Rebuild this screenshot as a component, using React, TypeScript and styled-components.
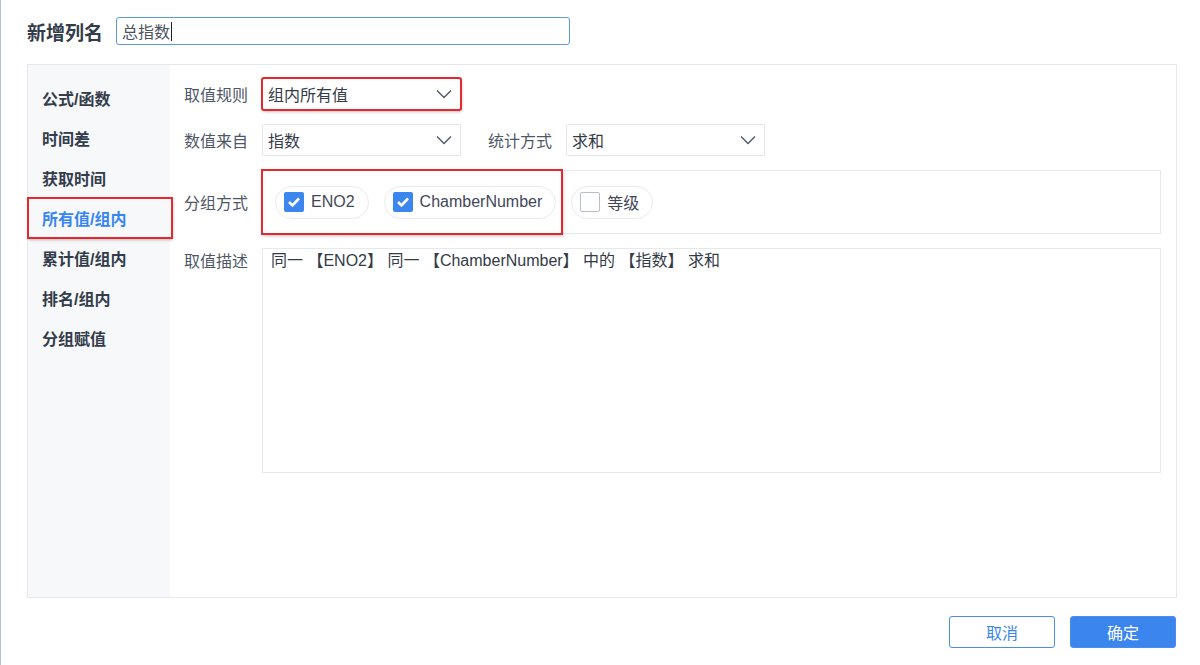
import React from 'react'
import styled, { createGlobalStyle, css } from 'styled-components'

const GlobalStyle = createGlobalStyle`
  html, body {
    margin: 0;
    padding: 0;
    background: #ffffff;
  }
  body {
    font-family: 'Liberation Sans', 'Noto Sans CJK SC', sans-serif;
    color: #333b48;
  }
`

const Page = styled.div`
  box-sizing: border-box;
  width: 1200px;
  height: 665px;
  border-left: 1px solid #b7bfca;
  padding: 17px 24px 0 26px;
  display: flex;
  flex-direction: column;
`

const Header = styled.div`
  display: flex;
  align-items: center;
  gap: 13px;
`

const Title = styled.div`
  font-size: 19px;
  font-weight: 700;
  color: #333c4a;
`

const NameInput = styled.div`
  box-sizing: border-box;
  width: 454px;
  height: 28px;
  border: 1px solid #5d9ae6;
  border-radius: 3px;
  padding: 0 5px;
  display: flex;
  align-items: center;
  font-size: 16px;
  color: #4a5260;
`

const Caret = styled.span`
  width: 1px;
  height: 19px;
  margin-left: 1px;
  background: #222;
`

const Panel = styled.div`
  box-sizing: border-box;
  margin-top: 19px;
  width: 1150px;
  height: 534px;
  border: 1px solid #e6e8ec;
  display: flex;
`

const Sidebar = styled.div`
  width: 142px;
  flex-shrink: 0;
  background: #f7f8fa;
  padding-top: 13px;
  display: flex;
  flex-direction: column;
`

const Highlight = css`
  outline: 2px solid #e8262d;
  outline-offset: -1px;
  box-shadow: 1px 2px 3px rgba(0, 0, 0, 0.25);
`

const NavItem = styled.div<{ active?: boolean }>`
  height: 40px;
  display: flex;
  align-items: center;
  padding-left: 14px;
  font-size: 16px;
  font-weight: 700;
  color: ${({ active }) => (active ? '#3685f0' : '#333c4a')};
  ${({ active }) => active && Highlight}
  ${({ active }) => active && 'margin-right: -2px; position: relative; z-index: 1;'}
`

const Content = styled.div`
  flex: 1;
  padding: 13px 15px 0 14px;
  display: flex;
  flex-direction: column;
  gap: 14px;
`

const Row = styled.div<{ align?: string }>`
  display: flex;
  align-items: ${({ align }) => align ?? 'center'};
`

const Label = styled.div<{ gapLeft?: number }>`
  width: 78px;
  flex-shrink: 0;
  font-size: 16px;
  color: #4f5766;
  margin-left: ${({ gapLeft }) => gapLeft ?? 0}px;
`

const Select = styled.div<{ highlighted?: boolean }>`
  box-sizing: border-box;
  width: 199px;
  height: 32px;
  border: 1px solid #e4e6ea;
  border-radius: 2px;
  background: #fff;
  display: flex;
  align-items: center;
  justify-content: space-between;
  padding: 0 8px 0 5px;
  font-size: 16px;
  color: #333b48;
  ${({ highlighted }) => highlighted && Highlight}
`

const GroupBox = styled.div`
  box-sizing: border-box;
  flex: 1;
  height: 64px;
  border: 1px solid #e6e8ec;
  display: flex;
  align-items: stretch;
`

const PillHighlight = styled.div`
  display: flex;
  align-items: center;
  gap: 15px;
  padding: 0 6px 0 13px;
  margin: -1px 0 -1px -1px;
  ${Highlight}
`

const Pill = styled.label`
  box-sizing: border-box;
  height: 33px;
  border: 1px solid #e8eaee;
  border-radius: 17px;
  padding: 0 13px 0 8px;
  display: flex;
  align-items: center;
  gap: 7px;
  font-size: 16px;
  color: #3f4757;
  align-self: center;
`

const LonePill = styled(Pill)`
  margin-left: 9px;
`

const Box = styled.span<{ checked?: boolean }>`
  box-sizing: border-box;
  width: 20px;
  height: 20px;
  border-radius: 2px;
  display: flex;
  align-items: center;
  justify-content: center;
  background: ${({ checked }) => (checked ? '#3b87ef' : '#fff')};
  border: ${({ checked }) => (checked ? 'none' : '1px solid #b9bfc9')};
`

const DescBox = styled.div`
  box-sizing: border-box;
  flex: 1;
  height: 225px;
  border: 1px solid #e6e8ec;
  padding: 1px 8px;
  font-size: 16px;
  line-height: 22px;
  color: #333b48;
`

const Footer = styled.div`
  margin-top: 18px;
  display: flex;
  justify-content: flex-end;
  gap: 15px;
`

const Button = styled.button<{ primary?: boolean }>`
  box-sizing: border-box;
  width: 106px;
  height: 32px;
  border-radius: 3px;
  font-family: inherit;
  font-size: 16px;
  cursor: pointer;
  border: 1px solid #4a8eea;
  background: ${({ primary }) => (primary ? '#3a86ee' : '#fff')};
  color: ${({ primary }) => (primary ? '#fff' : '#3a86ee')};
`

function Chevron() {
  return (
    <svg width="16" height="10" viewBox="0 0 16 10">
      <polyline points="1,1.5 8,8.5 15,1.5" fill="none" stroke="#4d5868" strokeWidth="1.4" />
    </svg>
  )
}

function Check({ checked, children }: { checked?: boolean; children: React.ReactNode }) {
  return (
    <>
      <Box checked={checked}>
        {checked && (
          <svg width="14" height="12" viewBox="0 0 14 12">
            <polyline points="2,6 5.5,9.5 12,2.5" fill="none" stroke="#fff" strokeWidth="2.6" />
          </svg>
        )}
      </Box>
      {children}
    </>
  )
}

const navItems = ['公式/函数', '时间差', '获取时间', '所有值/组内', '累计值/组内', '排名/组内', '分组赋值']

export default function App() {
  return (
    <Page>
      <GlobalStyle />
      <Header>
        <Title>新增列名</Title>
        <NameInput>
          总指数
          <Caret />
        </NameInput>
      </Header>

      <Panel>
        <Sidebar>
          {navItems.map((item) => (
            <NavItem key={item} active={item === '所有值/组内'}>
              {item}
            </NavItem>
          ))}
        </Sidebar>

        <Content>
          <Row>
            <Label>取值规则</Label>
            <Select highlighted>
              组内所有值
              <Chevron />
            </Select>
          </Row>

          <Row>
            <Label>数值来自</Label>
            <Select>
              指数
              <Chevron />
            </Select>
            <Label gapLeft={27}>统计方式</Label>
            <Select>
              求和
              <Chevron />
            </Select>
          </Row>

          <Row>
            <Label>分组方式</Label>
            <GroupBox>
              <PillHighlight>
                <Pill>
                  <Check checked>ENO2</Check>
                </Pill>
                <Pill>
                  <Check checked>ChamberNumber</Check>
                </Pill>
              </PillHighlight>
              <LonePill>
                <Check>等级</Check>
              </LonePill>
            </GroupBox>
          </Row>

          <Row align="flex-start">
            <Label>取值描述</Label>
            <DescBox>同一 【ENO2】 同一 【ChamberNumber】 中的 【指数】 求和</DescBox>
          </Row>
        </Content>
      </Panel>

      <Footer>
        <Button>取消</Button>
        <Button primary>确定</Button>
      </Footer>
    </Page>
  )
}
